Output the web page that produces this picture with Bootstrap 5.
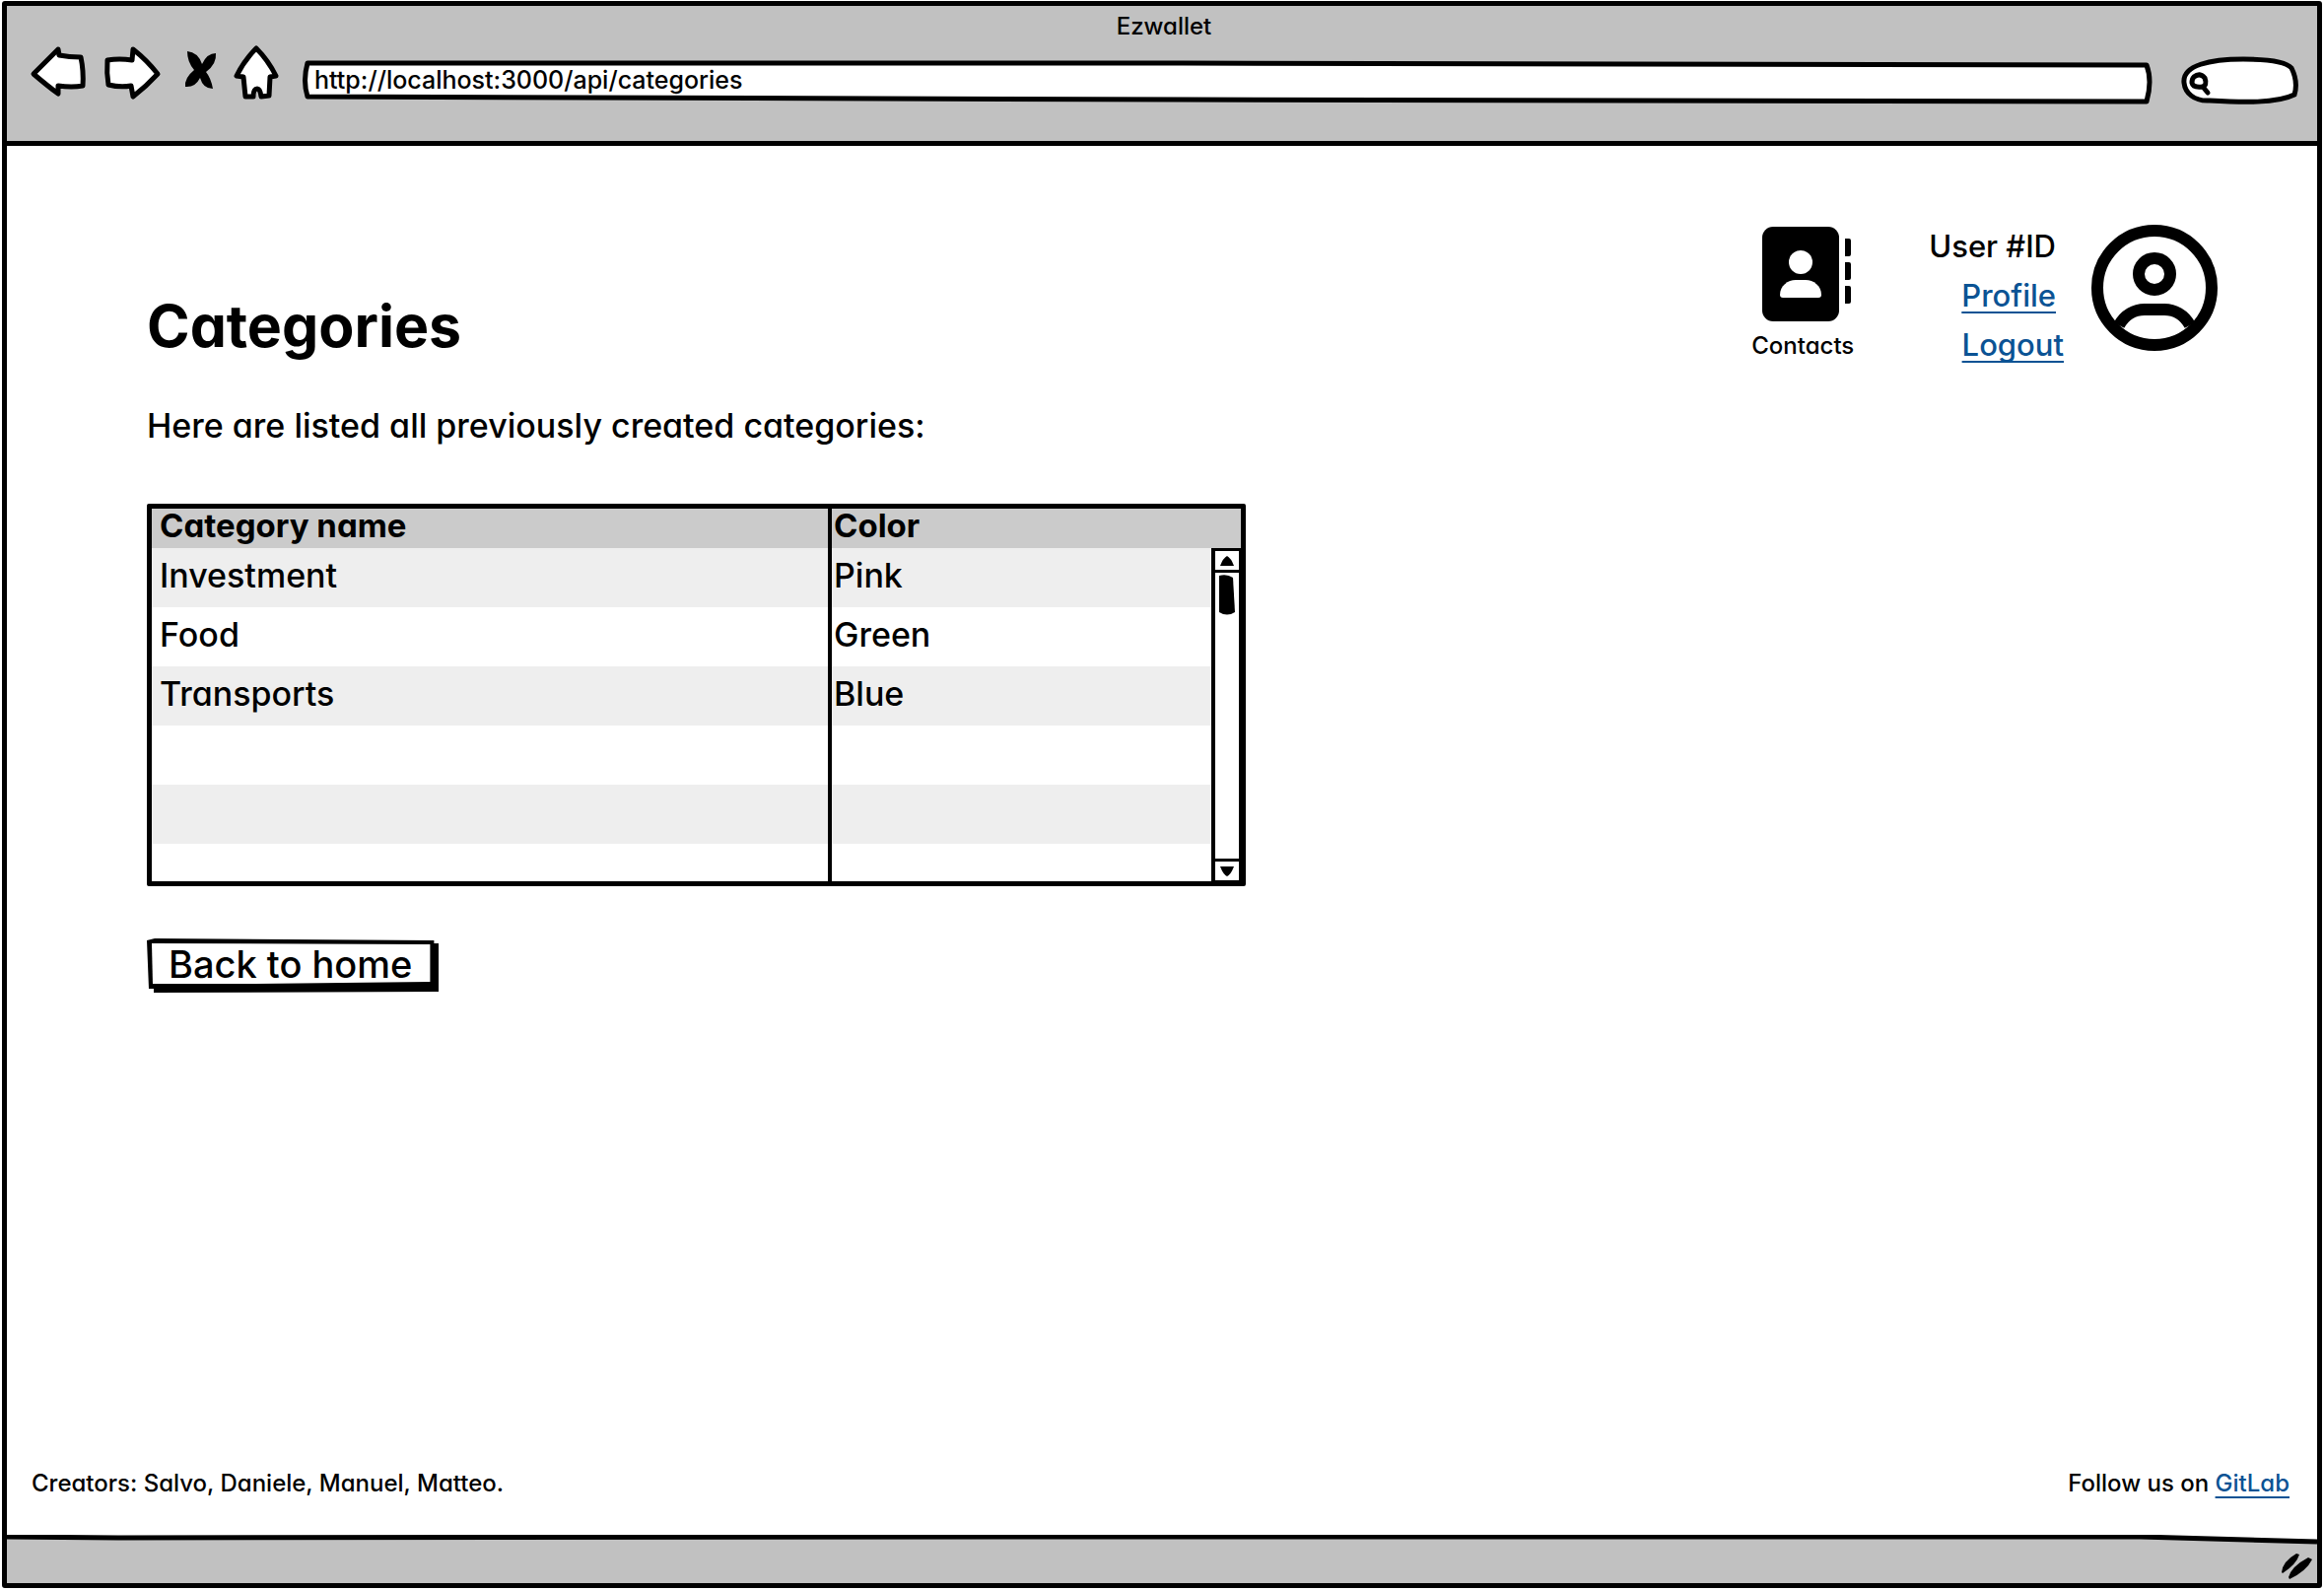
<!DOCTYPE html>
<html lang="en">
<head>
<meta charset="utf-8">
<meta name="viewport" content="width=device-width, initial-scale=1">
<title>Ezwallet</title>
<link href="https://cdn.jsdelivr.net/npm/bootstrap@5.3.0/dist/css/bootstrap.min.css" rel="stylesheet">
<style>
  body { font-family: Inter, "Open Sans", sans-serif; font-feature-settings: "cv11"; font-size: 34px; font-weight: 500; color: #000; background: #fff; padding: 1px 2px 3px; }
  a { color: #0b5394; text-decoration-thickness: 2px; text-underline-offset: 5px; text-decoration-skip-ink: none; }
  button { color: #000; }
  .browser { border: 5px solid #000; border-radius: 3px; min-height: calc(100vh - 4px); }
  .text-small { font-size: 24px; line-height: 36px; font-weight: 500; }
  .text-user { font-size: 31px; line-height: 50px; }

  .toolbar { background: #c1c1c1; border-bottom: 5px solid #000; padding: 3px 17px 34px 21px; }
  .tool-row { gap: 10px; }
  .tool-btn { border: 0; background: none; padding: 0; }
  .tool-btn svg, .sketch { display: block; }
  .sketch { position: absolute; top: 0; left: 0; width: 100%; height: 100%; }
  .address { height: 64px; margin: 0 15px 0 10px; }
  .address input { height: 64px; padding: 8px 15px 0 13px; line-height: 36px; font-size: 25px; }
  .finder { width: 123px; height: 64px; }
  .finder input { height: 64px; padding: 6px 16px 0 32px; }
  .bare { position: relative; width: 100%; border: 0; outline: 0; background: transparent; color: #000; }

  .page { padding: 77px 101px 0 142px; }
  .title-main { font-size: 59px; line-height: 72px; font-weight: 700; margin: 70px 0 0; }
  .account { gap: 28px; }
  .contacts { margin: 5px 48px 0 0; color: #000; }
  .contacts .text-small { margin-top: 7px; }
  .avatar { margin-top: 3px; }
  .intro { line-height: 50px; margin: 32px 0 54px; }

  .grid-box { border: 5px solid #000; border-radius: 2px; max-width: 1115px; height: 388px; margin-bottom: 53px; overflow: hidden; }
  .grid-box table { width: 100%; table-layout: fixed; border-collapse: collapse; }
  .grid-box th, .grid-box td { line-height: 55px; padding: 0 0 5px 8px; height: 60px; }
  .grid-box th { background: #cbcbcb; line-height: 34px; height: 40px; padding-bottom: 6px; font-size: 33px; }
  .grid-box tr > :first-child { width: 688px; border-right: 4px solid #000; }
  .grid-box tr > :last-child { padding-left: 2px; }
  .grid-box tbody tr:nth-child(odd) td { background: #eee; }
  .scroller { position: absolute; top: 40px; right: 0; bottom: 0; width: 30px; background: #fff; border: solid #000; border-width: 3px 2px 1px 4px; }
  .scroller button { border: 0 solid #000; background: #fff; padding: 0; height: 22px; width: 100%; }
  .scroller button:first-child { border-bottom-width: 3px; }
  .scroller button:last-child { border-top-width: 3px; }
  .scroller svg { display: block; margin: auto; }
  .btn-home { border: 0; background: none; font-size: 38px; font-weight: 500; line-height: 52px; height: 55px; padding: 0 27px 3px 22px; }

  .credits { padding: 0 28px 34px 25px; }
  .statusbar { height: 49px; }
  .grip { right: 3px; bottom: 3px; }
</style>
<script src="https://cdn.jsdelivr.net/npm/bootstrap@5.3.0/dist/js/bootstrap.bundle.min.js"></script>
</head>
<body>
<div class="browser d-flex flex-column">
  <header class="toolbar">
    <div class="text-small text-center">Ezwallet</div>
    <div class="tool-row d-flex align-items-center">
      <button class="tool-btn" type="button" aria-label="Back">
        <svg width="64" height="64" viewBox="28 45 64 64" fill="#fff" stroke="#000" stroke-width="5" stroke-linejoin="round"><path d="M59 50L34 75Q48 87 59 95L59 87Q73 89 84 87Q85 72 82 58Q70 58 60 56Z"/></svg>
      </button>
      <button class="tool-btn" type="button" aria-label="Forward">
        <svg width="64" height="64" viewBox="102 45 64 64" fill="#fff" stroke="#000" stroke-width="5" stroke-linejoin="round"><path d="M135 50Q149 61 160 75Q148 88 135 98L133 87Q122 89 110 86Q108 74 109 61Q121 59 134 61Z"/></svg>
      </button>
      <button class="tool-btn" type="button" aria-label="Stop">
        <svg width="48" height="64" viewBox="176 45 48 64"><path d="M190 52Q201 53 205 65Q210 54 219 54Q220 65 209 73Q214 79 216 90Q206 90 203 79Q198 89 188 88Q187 79 197 71Q190 63 190 52Z"/></svg>
      </button>
      <button class="tool-btn" type="button" aria-label="Home">
        <svg width="52" height="64" viewBox="234 45 52 64" fill="#fff" stroke="#000" stroke-width="5" stroke-linejoin="round"><path d="M260 49Q248 61 240 77L247 78L249 98L257 98Q257 90 261 90Q264 90 265 98L273 97L274 78L280 77Q272 61 260 49Z"/></svg>
      </button>
      <div class="address position-relative flex-fill">
        <svg class="sketch" viewBox="306 45 1880 64" preserveAspectRatio="none"><path d="M312 64L1200 64L2178 66Q2184 82 2178 103L1200 101L312 98Q307 82 312 64Z" fill="#fff" stroke="#000" stroke-width="5" stroke-linejoin="round"/></svg>
        <input class="bare text-small" type="text" aria-label="Address" value="http://localhost:3000/api/categories">
      </div>
      <div class="finder position-relative">
        <svg class="sketch" viewBox="2211 45 123 64"><path d="M2216 84C2214 66 2243 60 2276 60C2303 60 2320 63 2325 69C2329 77 2331 86 2328 96C2310 105 2275 104 2242 102C2226 103 2217 94 2216 84Z" fill="#fff" stroke="#000" stroke-width="5"/><path d="M2226 78Q2232 73 2237 79Q2240 87 2234 88Q2225 89 2224 84Q2224 80 2226 78ZM2235 88L2240 94" fill="none" stroke="#000" stroke-width="5" stroke-linecap="round"/></svg>
        <input class="bare text-small" type="search" aria-label="Search">
      </div>
    </div>
  </header>

  <main class="page flex-fill">
    <div class="d-flex justify-content-between align-items-start">
      <h1 class="title-main">Categories</h1>
      <div class="account d-flex align-items-start">
        <a class="contacts d-flex flex-column align-items-center text-decoration-none" href="#">
          <svg width="100" height="96" viewBox="-9 0 100 96"><rect width="78" height="96" rx="11"/><path d="M84 12h4q2 0 2 2v14q0 2-2 2h-4zM84 36h4q2 0 2 2v14q0 2-2 2h-4zM84 60h4q2 0 2 2v14q0 2-2 2h-4z"/><circle cx="39" cy="36" r="12" fill="#fff"/><path d="M18 69C18 60 26 54 34 54H44C52 54 60 60 60 69Q60 72 57 72H21Q18 72 18 69Z" fill="#fff"/></svg>
          <span class="text-small">Contacts</span>
        </a>
        <div class="text-user text-end">
          <div class="pe-2">User #ID</div>
          <div class="pe-2"><a href="#">Profile</a></div>
          <div><a href="#">Logout</a></div>
        </div>
        <svg class="avatar" width="128" height="128" viewBox="0 0 128 128" fill="none" stroke="#000" stroke-width="12"><circle cx="64" cy="64" r="58"/><circle cx="64" cy="50" r="16"/><path d="M28 102C34 91 44 86 54 86H74C84 86 94 91 100 102"/></svg>
      </div>
    </div>
    <p class="intro">Here are listed all previously created categories:</p>

    <div class="grid-box position-relative">
      <table>
        <thead><tr><th scope="col">Category name</th><th scope="col">Color</th></tr></thead>
        <tbody>
          <tr><td>Investment</td><td>Pink</td></tr>
          <tr><td>Food</td><td>Green</td></tr>
          <tr><td>Transports</td><td>Blue</td></tr>
          <tr><td></td><td></td></tr>
          <tr><td></td><td></td></tr>
          <tr><td></td><td></td></tr>
        </tbody>
      </table>
      <div class="scroller d-flex flex-column">
        <button type="button" aria-label="Scroll up"><svg width="16" height="12"><path d="M1 11Q4 3 8 1Q12 3 15 11Z"/></svg></button>
        <svg class="mt-0 mb-auto" width="24" height="46"><path d="M4 3Q12 1 18 5L20 40Q12 45 4 40Z"/></svg>
        <button type="button" aria-label="Scroll down"><svg width="16" height="12"><path d="M1 1H15Q12 9 8 11Q4 9 1 1Z"/></svg></button>
      </div>
    </div>

    <button class="btn-home position-relative" type="button">
      <svg class="sketch" viewBox="149 952 297 55" preserveAspectRatio="none"><path d="M149 954L157 952L441 954V957H446V1006L156 1007V1003H151Z"/><path d="M154 957L437 958V996L260 998H155Z" fill="#fff"/></svg>
      <span class="position-relative">Back to home</span>
    </button>
  </main>

  <footer>
    <div class="credits text-small d-flex justify-content-between">
      <span>Creators: Salvo, Daniele, Manuel, Matteo.</span>
      <span>Follow us on <a href="#">GitLab</a></span>
    </div>
    <div class="statusbar position-relative">
      <svg class="sketch" viewBox="7 1557 2344 49" preserveAspectRatio="none"><path d="M7 1559L2172 1559L2351 1564V1606H7Z" fill="#c1c1c1"/><path d="M7 1559L120 1560L1100 1559L2172 1559L2351 1564" fill="none" stroke="#000" stroke-width="5"/></svg>
      <svg class="grip position-absolute" width="34" height="28" viewBox="2314 1575 34 28"><path d="M2315 1595Q2316 1584 2330 1576L2333 1577Q2330 1587 2316 1596ZM2322 1600Q2325 1589 2342 1580L2346 1582Q2340 1594 2323 1602Z"/></svg>
    </div>
  </footer>
</div>
</body>
</html>
